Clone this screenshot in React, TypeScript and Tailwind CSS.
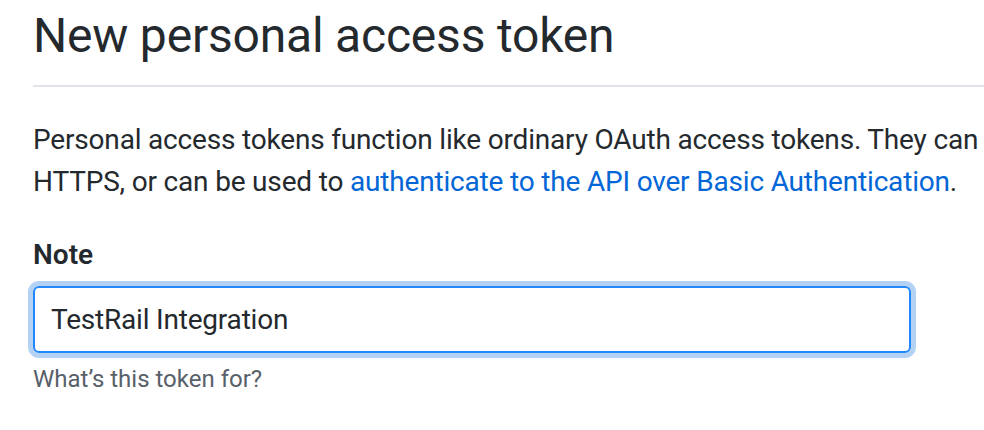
import React from "react";

export default function App() {
  return (
    <div
      className="w-[984px] h-[430px] overflow-hidden bg-white text-[#24292e]"
      style={{ fontFamily: "Roboto, 'Liberation Sans', sans-serif" }}
    >
      <div className="pl-[33px]">
        <div className="border-b-2 border-[#e1e4e8] pt-[1px] pb-[14px]">
          <h1 className="text-[48px] leading-[70px] font-normal m-0 whitespace-nowrap tracking-[-0.2px]">
            New personal access token
          </h1>
        </div>
        <p className="mt-[32px] text-[28px] leading-[42px] whitespace-nowrap tracking-[-0.18px]">
          Personal access tokens function like ordinary OAuth access tokens. They can be used instead of a password for Git over
          <br />
          HTTPS, or can be used to{" "}
          <a className="text-[#0366d6]" href="#">
            authenticate to the API over Basic Authentication
          </a>
          .
        </p>
        <div className="mt-[31px]">
          <div className="text-[28px] leading-[42px] font-semibold">Note</div>
          <div className="mt-[10px] w-[878px] h-[67px] rounded-[6px] border-2 border-[#2188ff] shadow-[0_0_0_5px_rgba(3,102,214,0.3)] flex items-center px-[16px] text-[28px] tracking-[-0.2px]">
            TestRail Integration
          </div>
          <div className="mt-[8px] text-[24px] leading-[36px] text-[#586069]">
            What’s this token for?
          </div>
        </div>
      </div>
    </div>
  );
}
